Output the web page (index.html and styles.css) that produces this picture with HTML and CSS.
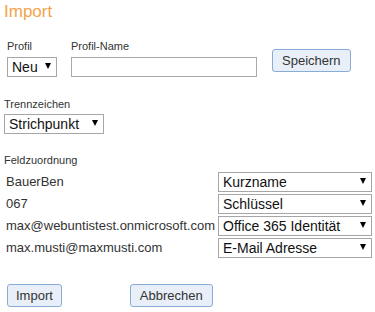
FILE: index.html
```html
<!DOCTYPE html>
<html lang="de">
<head>
<meta charset="utf-8">
<title>Import</title>
<link rel="stylesheet" href="styles.css">
</head>
<body>
<div class="page">
  <h1 class="title">Import</h1>

  <div class="profile-row">
    <div class="field field-profile">
      <label class="lbl" for="profil">Profil</label>
      <span class="sel sel-neu"><select id="profil"><option>Neu</option></select></span>
    </div>
    <div class="field field-name">
      <label class="lbl" for="pname">Profil-Name</label>
      <input id="pname" class="txt" type="text">
    </div>
    <button class="btn btn-save" type="button">Speichern</button>
  </div>

  <div class="section section-sep">
    <label class="lbl" for="sep">Trennzeichen</label>
    <span class="sel sel-sep"><select id="sep"><option>Strichpunkt</option></select></span>
  </div>

  <div class="section section-map">
    <div class="lbl">Feldzuordnung</div>
    <table class="map">
      <tr>
        <td class="src">BauerBen</td>
        <td class="dst"><span class="sel sel-map"><select><option>Kurzname</option></select></span></td>
      </tr>
      <tr>
        <td class="src">067</td>
        <td class="dst"><span class="sel sel-map"><select><option>Schlüssel</option></select></span></td>
      </tr>
      <tr>
        <td class="src">max@webuntistest.onmicrosoft.com</td>
        <td class="dst"><span class="sel sel-map"><select><option>Office 365 Identität</option></select></span></td>
      </tr>
      <tr>
        <td class="src">max.musti@maxmusti.com</td>
        <td class="dst"><span class="sel sel-map"><select><option>E-Mail Adresse</option></select></span></td>
      </tr>
    </table>
  </div>

  <div class="actions">
    <button class="btn btn-import" type="button">Import</button>
    <button class="btn btn-cancel" type="button">Abbrechen</button>
  </div>
</div>
</body>
</html>
```

FILE: styles.css
```css
html, body {
  margin: 0;
  padding: 0;
  background: #ffffff;
}

body {
  font-family: "Liberation Sans", Arial, sans-serif;
  color: #333333;
}

.page {
  padding: 2px 4px 0 4px;
}

.title {
  margin: 0;
  font-size: 17px;
  line-height: 20px;
  font-weight: normal;
  color: #f4a44b;
}

.lbl {
  display: block;
  font-size: 11px;
  line-height: 13px;
  color: #333333;
}

/* profile row */
.profile-row {
  display: flex;
  align-items: flex-start;
  margin-top: 18px;
  margin-left: 3px;
}

.field .lbl {
  margin-bottom: 4px;
}

.field-profile {
  margin-right: 14px;
}

.field-name {
  margin-right: 15px;
}

.txt {
  display: block;
  box-sizing: border-box;
  width: 186px;
  height: 20px;
  margin: 0;
  padding: 0 3px;
  border: 1px solid #a9a9a9;
  background: #ffffff;
  font-family: "Liberation Sans", Arial, sans-serif;
  font-size: 13px;
}

/* select look-alike with a small black triangle */
.sel {
  position: relative;
  display: inline-block;
  vertical-align: top;
}

.sel select {
  display: block;
  -webkit-appearance: none;
  appearance: none;
  box-sizing: border-box;
  height: 20px;
  margin: 0;
  padding: 0 18px 0 4px;
  border: 1px solid #a6a6a6;
  border-radius: 0;
  background: #ffffff;
  color: #111111;
  font-family: "Liberation Sans", Arial, sans-serif;
  font-size: 14px;
  line-height: 18px;
}

.sel::after {
  content: "";
  position: absolute;
  right: 6px;
  top: calc(50% - 4px);
  width: 0;
  height: 0;
  border-left: 3.5px solid transparent;
  border-right: 3.5px solid transparent;
  border-top: 6px solid #000000;
  pointer-events: none;
}

.sel-neu select {
  width: 50px;
}

.sel-sep select {
  width: 100px;
}

.sel-map select {
  width: 154px;
}

/* buttons */
.btn {
  box-sizing: border-box;
  height: 23px;
  margin: 0;
  padding: 0 9px;
  border: 1px solid #88acd8;
  border-radius: 3px;
  background: #e8eff8;
  color: #333333;
  font-family: "Liberation Sans", Arial, sans-serif;
  font-size: 13px;
  line-height: 21px;
}

.btn-save {
  margin-top: 9px;
}

.btn-import {
  padding: 0 8px;
}

/* sections */
.section-sep {
  margin-top: 21px;
}

.section-sep .lbl {
  margin-bottom: 3px;
}

.section-map {
  margin-top: 20px;
}

.map {
  margin-top: 4px;
  border-collapse: collapse;
  border-spacing: 0;
}

.map td {
  padding: 1px 0;
  vertical-align: middle;
}

.map .src {
  padding-left: 2px;
  padding-right: 3px;
  font-size: 13px;
  line-height: 20px;
  white-space: nowrap;
  color: #333333;
}

.actions {
  display: flex;
  margin-top: 25px;
  margin-left: 3px;
}

.btn-cancel {
  margin-left: 68px;
}
```
